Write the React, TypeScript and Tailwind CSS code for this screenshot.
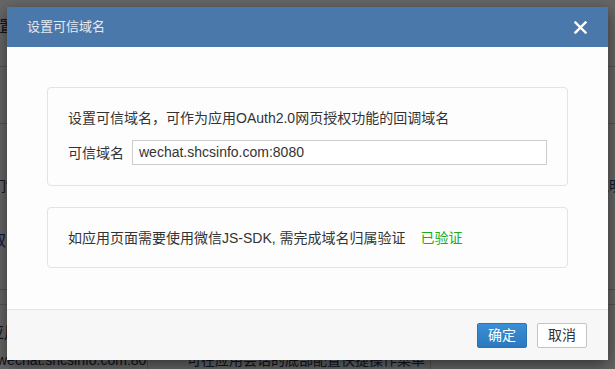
import React from 'react'

function CloseIcon() {
  return (
    <svg width="13" height="13" viewBox="0 0 13 13" fill="none">
      <path d="M1.5 1.5 L11.5 11.5 M11.5 1.5 L1.5 11.5" stroke="#ffffff" strokeWidth="2.4" strokeLinecap="square" />
    </svg>
  )
}

export default function App() {
  return (
    <div className="relative h-[369px] w-[615px] overflow-hidden bg-white font-['Liberation_Sans','Noto_Sans_CJK_SC',sans-serif]">
      {/* page behind the dialog */}
      <div className="flex flex-col text-[14px] text-[#2c3550]">
        <div className="h-[67px] border-b border-[#cfcfcf] pt-[15px] -ml-[17px] text-[16px]">设置</div>
        <div className="h-[57px] border-b border-[#cfcfcf]"></div>
        <div className="flex h-[166px] flex-col border-b border-[#cfcfcf]">
          <div className="mt-[52px] flex justify-between">
            <span className="-ml-[8px]">们“</span>
            <span className="-mr-[8px]">说明</span>
          </div>
          <div className="mt-[32px] -ml-[10px] text-[16px] text-[#23439a]">取消</div>
        </div>
        <div className="h-[15px] border-b border-[#cfcfcf]"></div>
        <div className="h-[46px] pt-[16px] -ml-[12px] text-[16px]">应用</div>
        <div className="flex h-[20px] items-start text-[14px] leading-[18px]">
          <div className="w-[151px] -ml-[3px] border-r border-[#cfcfcf]">wechat.shcsinfo.com:80</div>
          <div className="w-[12px] border-r border-[#cfcfcf]"></div>
          <div className="w-[271px] border-r border-[#cfcfcf] pl-[27px]">可在应用会话的底部配置快捷操作菜单</div>
        </div>
      </div>

      {/* mask */}
      <div className="absolute inset-0 bg-black/60"></div>

      {/* dialog */}
      <div className="absolute left-[7px] top-[7px] flex w-[601px] flex-col bg-[#fdfdfd] shadow-[0_5px_15px_rgba(0,0,0,0.5)]">
        <div className="flex h-[40px] items-center justify-between bg-[#4b78aa] pl-[20px] pr-[21px]">
          <span className="text-[13px] text-[#e4eaf2]">设置可信域名</span>
          <CloseIcon />
        </div>

        <div className="flex flex-col gap-[21px] px-[40px] pb-[41px] pt-[40px] text-[14px] text-[#333333]">
          <div className="rounded-[4px] border border-[#e3e3e3] bg-[#fdfdfd] px-[20px] pb-[20px] pt-[20px]">
            <div className="leading-[20px]">设置可信域名，可作为应用OAuth2.0网页授权功能的回调域名</div>
            <div className="mt-[12px] flex items-center">
              <span className="mr-[8px] leading-[20px]">可信域名</span>
              <div className="flex h-[25px] flex-1 items-center border border-[#cccccc] bg-white px-[6px] text-[#333333]">
                wechat.shcsinfo.com:8080
              </div>
            </div>
          </div>

          <div className="flex h-[61px] items-center rounded-[4px] border border-[#e3e3e3] bg-[#fdfdfd] px-[20px]">
            <span className="leading-[20px]">如应用页面需要使用微信JS-SDK, 需完成域名归属验证</span>
            <span className="ml-[15px] leading-[20px] text-[#1aad19]">已验证</span>
          </div>
        </div>

        <div className="flex h-[51px] items-center justify-end gap-[10px] border-t border-[#e5e5e5] bg-[#f7f7f7] pr-[21px]">
          <button className="h-[25px] w-[50px] rounded-[2px] border border-[#2a74b6] bg-gradient-to-b from-[#3b8fd5] to-[#2b78bd] text-[14px] text-white">确定</button>
          <button className="h-[25px] w-[50px] rounded-[2px] border border-[#c4c4c4] bg-white text-[14px] text-[#333333]">取消</button>
        </div>
      </div>
    </div>
  )
}
